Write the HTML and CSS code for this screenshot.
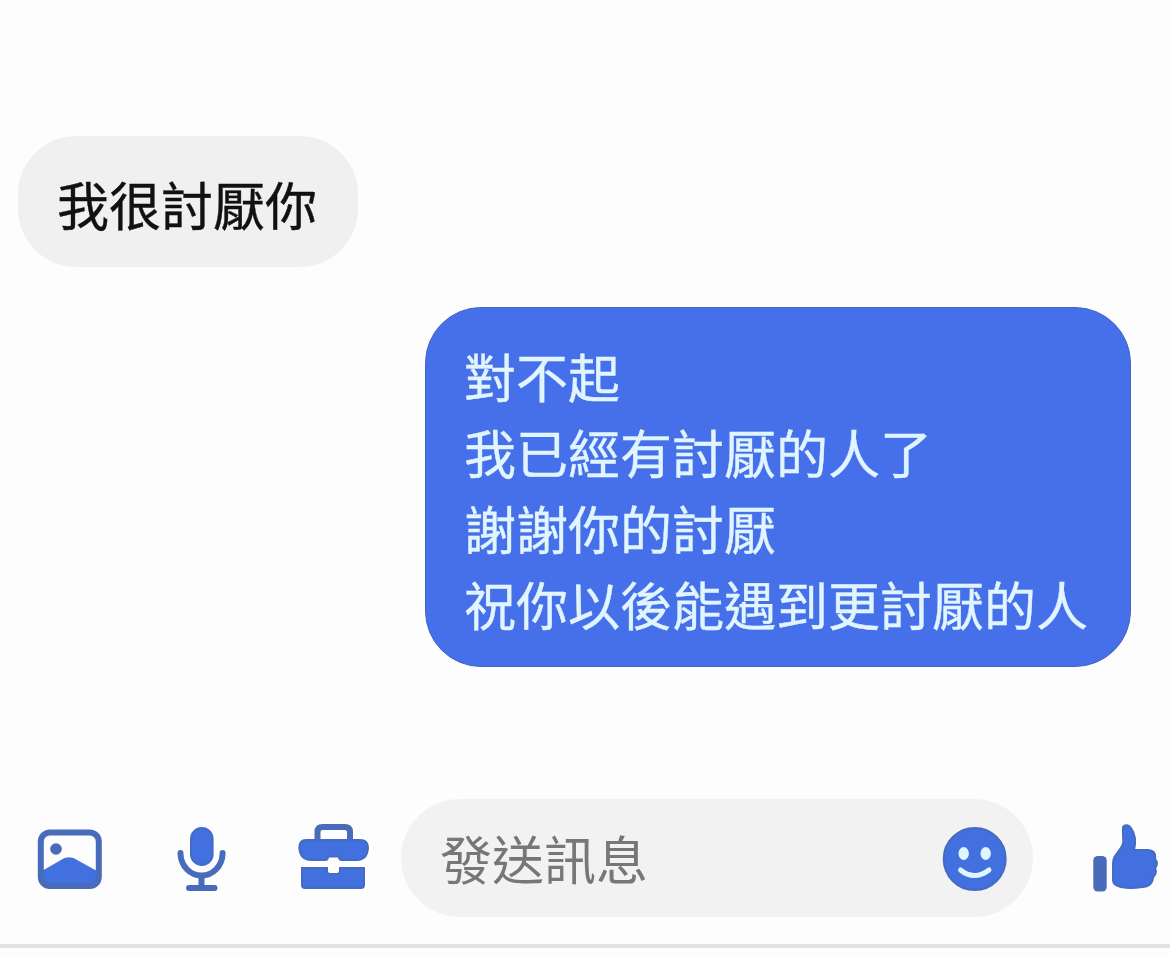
FILE: index.html
```html
<!DOCTYPE html>
<html lang="zh-Hant">

<head>
    <meta charset="UTF-8" />
    <meta name="viewport" content="width=device-width, initial-scale=1.0" />
    <title>聊天</title>
    <link rel="stylesheet" href="styles.css">
</head>

<body>
    <main class="messages">
        <div class="bubble received">我很討厭你</div>
        <div class="bubble sent">
            對不起<br>
            我已經有討厭的人了<br>
            謝謝你的討厭<br>
            祝你以後能遇到更討厭的人
        </div>
    </main>

    <footer class="composer">
        <svg class="icon icon-photo" width="68" height="72" viewBox="0 0 68 72">
            <path class="fill" d="M6 49 L24 38.5 Q33 32 42 38.5 L61 49 V59 Q61 63 57 63 H10 Q6 63 6 59 Z" />
            <rect class="line" x="4.8" y="10.5" width="58" height="53.4" rx="9" />
            <circle class="dark" cx="20" cy="27" r="5.8" />
        </svg>

        <svg class="icon icon-mic" width="52" height="72" viewBox="0 0 52 72">
            <rect class="fill edge" x="15" y="6" width="21.6" height="37" rx="10.8" />
            <path class="line" d="M4.5 31 V32 C5 44 14 53.5 25.5 53.5 S46.1 44 46.6 32 V31" />
            <path class="line" d="M25.5 54 V65 M13 66 H38.5" />
        </svg>

        <svg class="icon icon-case" width="74" height="72" viewBox="0 0 74 72">
            <path class="line" d="M20.5 19 V10 Q20.5 5 25.5 5 H48 Q53 5 53 10 V19" />
            <path class="fill edge" d="M9 18 H63 Q71 18 71 26 Q70 38 60 38 H45 Q42 38 42 34.5 H31 Q31 38 28 38 H14 Q3.3 38 2.3 26 Q2.3 18 9 18 Z" />
            <path class="fill edge" d="M5 46 H30 V49 Q30 52 33 52 H40 Q43 52 43 49 V46 H67 V63 Q67 66 64 66 H8 Q5 66 5 63 Z" />
        </svg>

        <div class="input-box">
            <span class="placeholder">發送訊息</span>
            <svg class="icon" width="66" height="72" viewBox="0 0 66 72">
                <circle class="fill edge" cx="32.7" cy="37" r="31" />
                <ellipse class="light" cx="21.7" cy="31.5" rx="5.2" ry="6.4" />
                <ellipse class="light" cx="43.7" cy="31.5" rx="5.2" ry="6.4" />
                <path class="smile" d="M18.5 48 Q25 53.5 32.5 53.5 T47 48" />
            </svg>
        </div>

        <svg class="icon icon-like" width="70" height="72" viewBox="0 0 70 72">
            <rect class="dark" x="3.3" y="34" width="13.4" height="35.5" rx="4.5" />
            <path class="fill edge" d="M33 5 C35 2 39 3 41 6 C46 13 46 20 44 28 H58 C63 28 66 31 65 37 C68 40 67 44 65 46 C67 50 65 54 63 55 C63 61 59 65 52 65 C46 66 36 66 31 65 C26 64 23 62 23 58 V42 C23 36 25 34 28 30 C33 24 34 21 33 14 Z" />
        </svg>
    </footer>
</body>

</html>
```

FILE: styles.css
```css
* {
    box-sizing: border-box;
}

body {
    margin: 0;
    height: 957px;
    display: flex;
    flex-direction: column;
    background: #fdfdfd;
    font-family: "Noto Sans CJK TC", sans-serif;
    font-size: 52px;
    overflow: hidden;
}

/* Mensagens */
.messages {
    height: 773px;
    padding: 136px 39px 0 18px;
    display: flex;
    flex-direction: column;
    gap: 40px;
}

.bubble {
    line-height: 76px;
    white-space: nowrap;
    -webkit-text-stroke: 0.4px currentColor;
}

.received {
    align-self: flex-start;
    height: 131px;
    padding: 30px 41px 0 39px;
    border-radius: 58px;
    background: #f0f0f0;
    color: #111;
}

.sent {
    align-self: flex-end;
    width: 706px;
    height: 360px;
    padding: 30px 0 0 38px;
    border: 1px solid #4666c4;
    border-radius: 56px;
    background: #466fea;
    color: #e0f5ff;
}

/* Barra inferior */
.composer {
    height: 175px;
    padding: 26px 10px 0 36px;
    display: flex;
    align-items: flex-start;
    border-bottom: 4px solid #e2e2e2;
}

.icon {
    display: block;
    flex: none;
    margin-top: 23px;
}

.icon-mic {
    margin-left: 72px;
}

.icon-case {
    margin-left: 69px;
}

.icon-like {
    margin-left: 57px;
}

.input-box {
    width: 632px;
    height: 118px;
    margin-left: 30px;
    padding: 0 25px 0 39px;
    display: flex;
    justify-content: space-between;
    border-radius: 59px;
    background: #f2f2f2;
}

.placeholder {
    padding-top: 21px;
    line-height: 76px;
    color: #777;
}

.fill {
    fill: #4270df;
}

.dark {
    fill: #486cba;
}

.edge {
    stroke: #456bc2;
    stroke-width: 2;
}

.line {
    fill: none;
    stroke: #486cba;
    stroke-width: 6;
    stroke-linecap: round;
}

.light {
    fill: #dff5ff;
}

.smile {
    fill: none;
    stroke: #dff5ff;
    stroke-width: 5;
    stroke-linecap: round;
}
```
